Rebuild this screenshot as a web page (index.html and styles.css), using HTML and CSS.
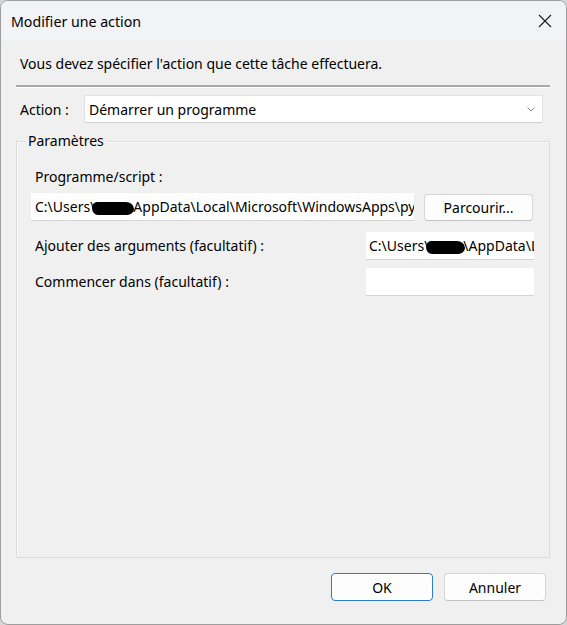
FILE: index.html
```html
<!DOCTYPE html>
<html lang="fr">
<head>
<meta charset="utf-8">
<title>Modifier une action</title>
<link rel="stylesheet" href="styles.css">
</head>
<body>
<div class="window">
  <div class="titlebar">
    <span class="title">Modifier une action</span>
    <svg class="close" width="14" height="14" viewBox="0 0 14 14"><path d="M1 1 L13 13 M13 1 L1 13" stroke="#1a1a1a" stroke-width="1.1" fill="none"/></svg>
  </div>
  <div class="content">
    <p class="intro">Vous devez spécifier l'action que cette tâche effectuera.</p>
    <div class="sep"></div>
    <div class="action-row">
      <span class="action-label">Action :</span>
      <div class="select">
        <span>Démarrer un programme</span>
        <svg class="chev" width="8" height="5" viewBox="0 0 8 5"><path d="M0.5 0.5 L4 4 L7.5 0.5" stroke="#8a8a8a" stroke-width="1" fill="none"/></svg>
      </div>
    </div>
    <div class="group">
      <span class="group-title">Paramètres</span>
      <div class="label first">Programme/script :</div>
      <div class="row-prog">
        <div class="field wide">C:\Users\<span class="redact"></span>AppData\Local\Microsoft\WindowsApps\py</div>
        <div class="btn browse">Parcourir...</div>
      </div>
      <div class="row-opt args">
        <span class="label">Ajouter des arguments (facultatif) :</span>
        <div class="field narrow">C:\Users\<span class="redact small"></span>\AppData\L</div>
      </div>
      <div class="row-opt start">
        <span class="label">Commencer dans (facultatif) :</span>
        <div class="field narrow"></div>
      </div>
    </div>
    <div class="buttons">
      <div class="btn ok">OK</div>
      <div class="btn">Annuler</div>
    </div>
  </div>
</div>
</body>
</html>
```
FILE: styles.css
```css
html, body {
  margin: 0;
  padding: 0;
  background: #d6d6d6;
}
body {
  font-family: "Noto Sans", "Open Sans", "DejaVu Sans", sans-serif;
  font-size: 14px;
  color: #000;
}
.window {
  box-sizing: border-box;
  width: 567px;
  height: 625px;
  border: 1px solid #9e9e9e;
  border-radius: 8px;
  overflow: hidden;
  background: #f0f0f0;
  display: flex;
  flex-direction: column;
}
.titlebar {
  height: 40px;
  flex: none;
  background: #f2f3f7;
  display: flex;
  align-items: center;
  justify-content: space-between;
  padding: 0 14px 0 10px;
}
.title {
  font-size: 14.2px;
  color: #000;
}
.close {
  display: block;
}
.content {
  flex: 1;
  display: flex;
  flex-direction: column;
  padding: 0 16px 0 15px;
}
.intro {
  margin: 15px 0 0 4px;
  line-height: 16px;
}
.sep {
  margin-top: 13px;
  height: 2px;
  background: #a8a8a8;
  border-bottom: 1px solid #ffffff;
}
.action-row {
  margin-top: 7px;
  display: flex;
  align-items: center;
}
.action-label {
  width: 68px;
  padding-left: 4px;
  box-sizing: border-box;
  flex: none;
}
.select {
  flex: 1;
  margin-right: 7px;
  height: 28px;
  box-sizing: border-box;
  background: #ffffff;
  border: 1px solid #e2e2e2;
  border-bottom-color: #d0d0d0;
  border-radius: 2px;
  display: flex;
  align-items: center;
  justify-content: space-between;
  padding: 0 7px 0 4px;
}
.chev {
  display: block;
}
.group {
  flex: 1;
  margin-top: 18px;
  border: 1px solid #dcdcdc;
  box-shadow: inset 1px 1px 0 #fafafa;
  padding: 0 15px 0 14px;
  display: flex;
  flex-direction: column;
}
.group-title {
  align-self: flex-start;
  margin: -9px 0 0 -6px;
  padding: 0 3px;
  line-height: 16px;
  background: #f0f0f0;
}
.label {
  line-height: 16px;
  padding-left: 4px;
}
.label.first {
  margin-top: 20px;
}
.row-prog {
  margin-top: 8px;
  display: flex;
  align-items: center;
  gap: 10px;
}
.field {
  box-sizing: border-box;
  height: 28px;
  background: #ffffff;
  border-bottom: 1px solid #d4d4d4;
  padding: 0 3px 0 4px;
  line-height: 27px;
  white-space: nowrap;
  overflow: hidden;
}
.field.wide {
  flex: 1;
}
.field.narrow {
  width: 168px;
  padding-left: 3px;
}
.redact {
  display: inline-block;
  width: 42px;
  height: 13px;
  background: #000;
  border-radius: 5px 8px 7px 6px / 6px 7px 6px 7px;
  vertical-align: -3px;
  margin: 0 -1px 0 -3px;
}
.redact.small {
  width: 39px;
  margin-right: -2px;
}
.row-opt {
  display: flex;
  align-items: center;
  justify-content: space-between;
}
.row-opt.args {
  margin-top: 11px;
}
.row-opt.start {
  margin-top: 8px;
}
.btn {
  box-sizing: border-box;
  height: 28px;
  background: #fdfdfd;
  border: 1px solid #d5d5d5;
  border-bottom-color: #c2c2c2;
  border-radius: 4px;
  display: flex;
  align-items: center;
  justify-content: center;
}
.browse {
  width: 109px;
  height: 27px;
  margin-right: 1px;
}
.buttons {
  margin: 15px 4px 23px 0;
  display: flex;
  justify-content: flex-end;
  gap: 11px;
}
.buttons .btn {
  width: 102px;
}
.btn.ok {
  border: 1px solid #2b7bd0;
  box-shadow: inset 0 0 0 1px #ffffff;
}
```
